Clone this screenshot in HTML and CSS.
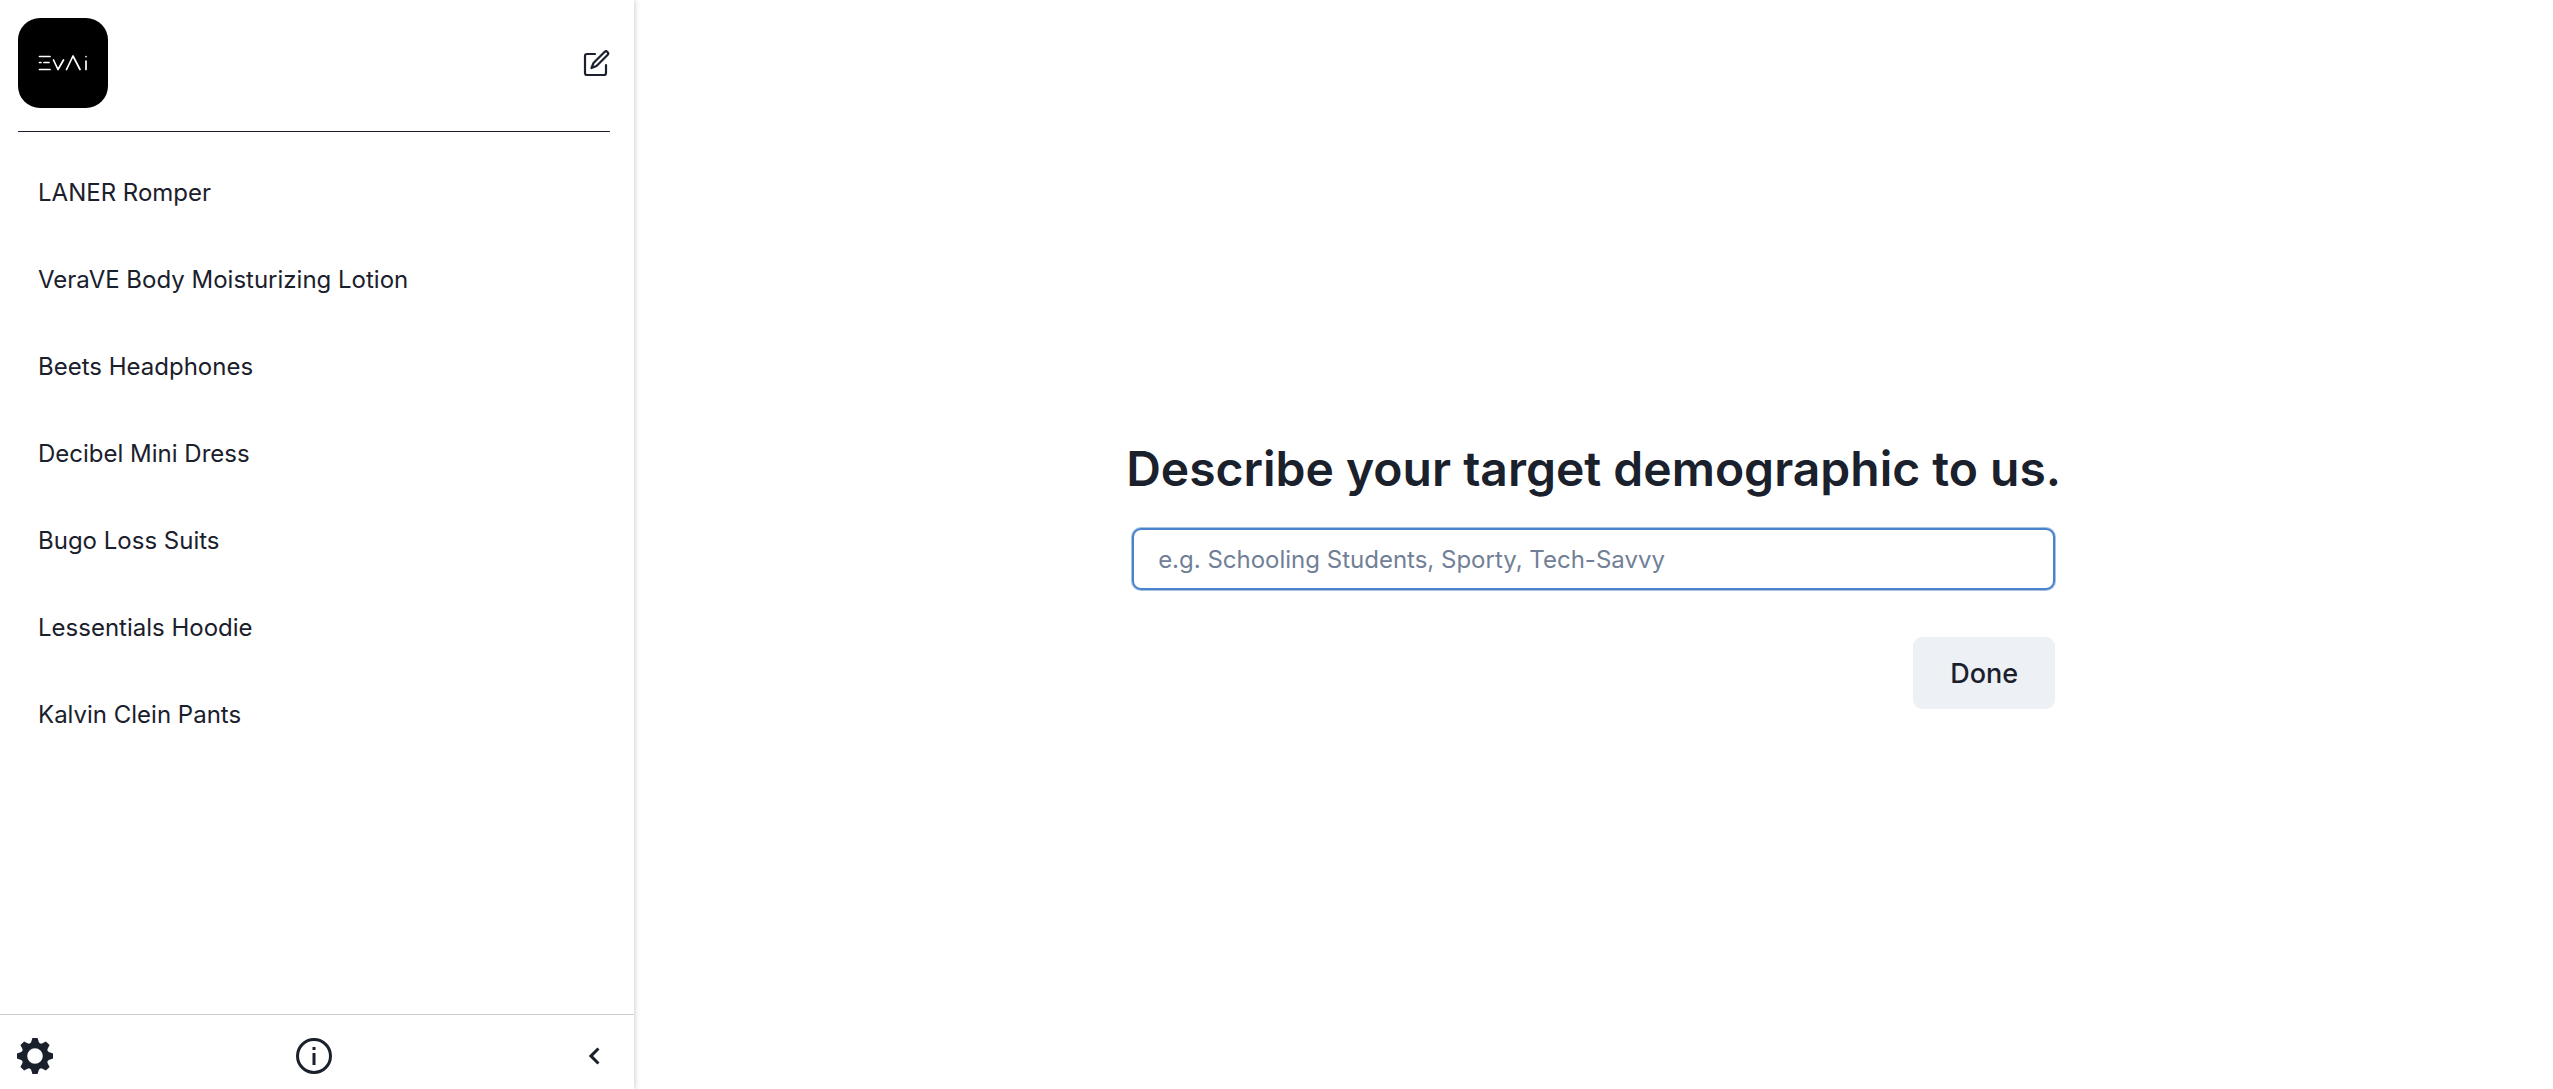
FILE: index.html
```html
<!DOCTYPE html>
<html lang="en">
<head>
    <meta charset="UTF-8">
    <meta name="viewport" content="width=device-width, initial-scale=1.0">
    <title>EvAi</title>
    <link rel="stylesheet" href="styles.css">
</head>
<body>
    <aside class="sidebar">
        <header class="sidebar-header">
            <a class="logo" href="#" aria-label="EvAi home">
                <svg viewBox="0 0 90 90" fill="none" stroke="#fff" stroke-width="1.7" stroke-linecap="round" stroke-linejoin="round">
                    <path d="M21.500 38.500H32M21.500 44.500h1.500M26 44.500h5M21.500 51.500H32"/>
                    <path d="M35.500 42l4.500 9.500L45.500 42M48.500 51.500l6.500-13.500 7 13.500M68 43v8.500M68 38.500v.1"/>
                </svg>
            </a>
            <button class="icon-button" type="button" aria-label="New project">
                <svg class="icon-edit" viewBox="0 0 28 28" fill="none" stroke="currentColor" stroke-width="2.2" stroke-linecap="round" stroke-linejoin="round">
                    <path d="M13 5H5a2 2 0 0 0-2 2v17a2 2 0 0 0 2 2h17a2 2 0 0 0 2-2v-8"/>
                    <path d="M22.500 3a2 2 0 0 1 3 3L14.500 17 9.500 19l2-5z"/>
                </svg>
            </button>
        </header>
        <nav class="projects">
            <a href="#">LANER Romper</a>
            <a href="#">VeraVE Body Moisturizing Lotion</a>
            <a href="#">Beets Headphones</a>
            <a href="#">Decibel Mini Dress</a>
            <a href="#">Bugo Loss Suits</a>
            <a href="#">Lessentials Hoodie</a>
            <a href="#">Kalvin Clein Pants</a>
        </nav>
        <footer class="sidebar-footer">
            <button class="icon-button" type="button" aria-label="Settings">
                <svg class="icon-large" viewBox="-18 -18 36 36" fill="currentColor">
                    <circle r="10.500" fill="none" stroke="currentColor" stroke-width="5.400"/>
                    <path id="tooth" d="M-2.600-18h5.200l1.300 4.200 2.400 2.800h-12.600l2.400-2.800z"/>
                    <use href="#tooth" transform="rotate(45)"/>
                    <use href="#tooth" transform="rotate(90)"/>
                    <use href="#tooth" transform="rotate(135)"/>
                    <use href="#tooth" transform="rotate(180)"/>
                    <use href="#tooth" transform="rotate(225)"/>
                    <use href="#tooth" transform="rotate(270)"/>
                    <use href="#tooth" transform="rotate(315)"/>
                </svg>
            </button>
            <button class="icon-button" type="button" aria-label="About">
                <svg class="icon-large" viewBox="0 0 36 36" fill="none" stroke="currentColor" stroke-width="3">
                    <circle cx="18" cy="18" r="16.500"/>
                    <path d="M18 15v12M18 9v3"/>
                </svg>
            </button>
            <button class="icon-button collapse" type="button" aria-label="Collapse sidebar">
                <svg class="icon-chevron" viewBox="0 0 12 18" fill="currentColor">
                    <path d="M11.500 2.600L9.400.5.800 9l8.600 8.500 2.100-2.100L5.100 9z"/>
                </svg>
            </button>
        </footer>
    </aside>
    <main class="content">
        <form class="prompt">
            <h1><label for="demographic">Describe your target demographic to us.</label></h1>
            <input type="text" id="demographic" placeholder="e.g. Schooling Students, Sporty, Tech-Savvy">
            <button class="done" type="button">Done</button>
        </form>
    </main>
</body>
</html>
```
FILE: styles.css
```css
* {
    box-sizing: border-box;
}
body {
    display: flex;
    min-height: 100vh;
    margin: 0;
    font-family: Inter, sans-serif;
    font-size: 24px;
    line-height: 36px;
    color: #1a202c;
    background-color: #fff;
}
.sidebar {
    display: flex;
    flex-direction: column;
    width: calc(25% - 4px);
    box-shadow: 0 0 6px rgba(0, 0, 0, 0.25);
}
.sidebar-header {
    display: flex;
    align-items: center;
    justify-content: space-between;
    margin: 0 24px 0 18px;
    padding: 18px 0 23px;
    border-bottom: 1px solid #1a202c;
}
.logo {
    width: 90px;
    height: 90px;
    border-radius: 22px;
    background-color: #000;
}
.logo svg,
.icon-button svg {
    display: block;
}
.icon-button {
    padding: 0;
    border: none;
    background: none;
    color: inherit;
    cursor: pointer;
}
.icon-edit {
    width: 28px;
    height: 28px;
}
.icon-large {
    width: 36px;
    height: 36px;
}
.icon-chevron {
    width: 12px;
    height: 18px;
}
.projects {
    display: flex;
    flex-direction: column;
    flex: 1;
    gap: 51px;
    padding: 43px 38px;
}
.projects a {
    color: inherit;
    text-decoration: none;
}
.sidebar-footer {
    display: flex;
    align-items: center;
    justify-content: space-between;
    height: 75px;
    padding: 8px 18px 0 17px;
    border-top: 1px solid #ccc;
}
.collapse {
    padding: 0 16px 0 14px;
}
.content {
    display: flex;
    flex: 1;
    align-items: center;
    justify-content: center;
}
.prompt {
    display: flex;
    flex-direction: column;
    padding-top: 60px;
}
.prompt h1 {
    margin: 0;
    font-size: 48px;
    font-weight: 600;
    line-height: 58px;
}
.prompt input {
    height: 62px;
    margin: 30px 6px 47px;
    padding: 0 24px;
    border: 2px solid #4a83cc;
    border-radius: 9px;
    outline: none;
    box-shadow: 0 0 0 1px #a5c1e6;
    font: inherit;
    color: inherit;
}
.prompt input::placeholder {
    color: #718096;
}
.done {
    align-self: flex-end;
    height: 72px;
    margin-right: 6px;
    padding: 0 37px;
    border: none;
    border-radius: 9px;
    background-color: #edf0f5;
    font-family: inherit;
    font-size: 27px;
    font-weight: 500;
    color: inherit;
    cursor: pointer;
}
```
